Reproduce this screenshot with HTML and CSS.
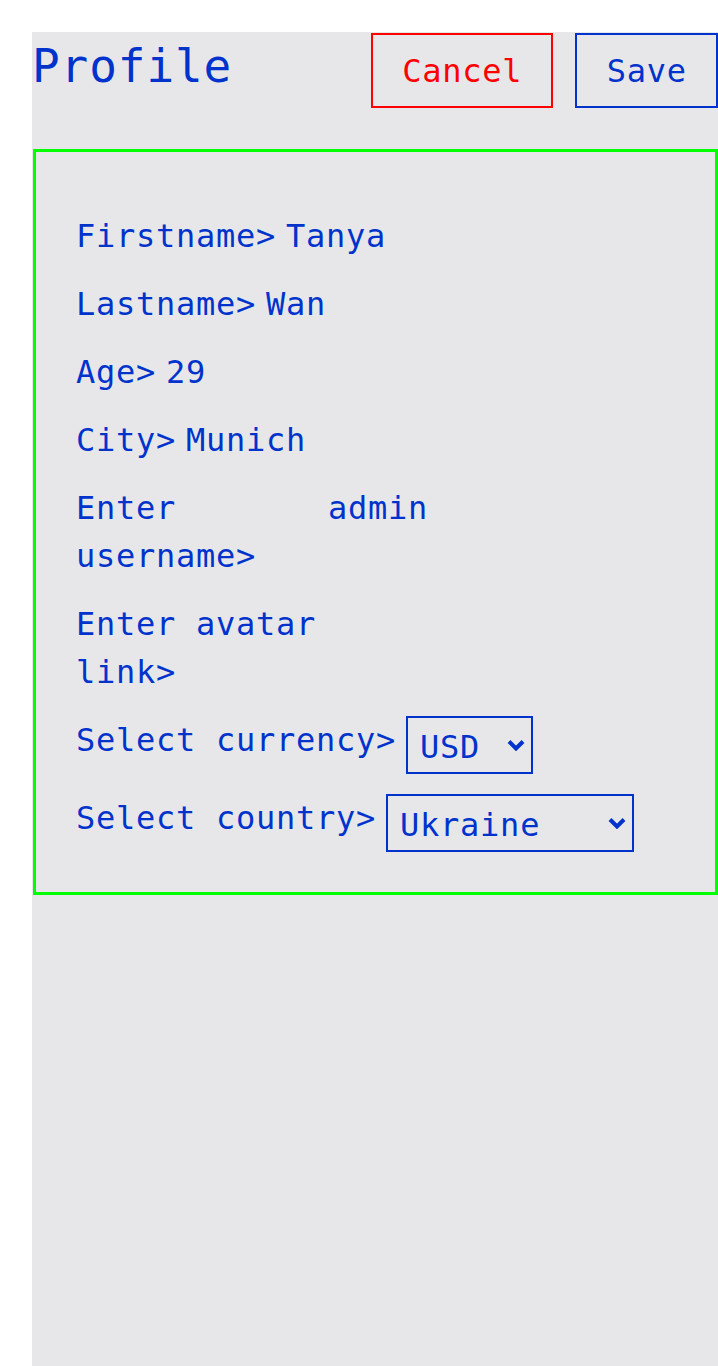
FILE: index.html
```html
<!DOCTYPE html>
<html lang="en">
<head>
<meta charset="utf-8">
<title>Profile</title>
<link rel="stylesheet" href="styles.css">
</head>
<body>
<div class="page">
  <header class="header">
    <h1 class="title">Profile</h1>
    <div class="actions">
      <button class="btn btn-cancel" type="button">Cancel</button>
      <button class="btn btn-save" type="button">Save</button>
    </div>
  </header>
  <form class="card">
    <div class="row"><span class="label">Firstname&gt;</span><span class="value">Tanya</span></div>
    <div class="row"><span class="label">Lastname&gt;</span><span class="value">Wan</span></div>
    <div class="row"><span class="label">Age&gt;</span><span class="value">29</span></div>
    <div class="row"><span class="label">City&gt;</span><span class="value">Munich</span></div>
    <div class="row"><label class="label" for="username">Enter username&gt;</label><input class="field" id="username" type="text" value="admin"></div>
    <div class="row"><label class="label" for="avatar">Enter avatar link&gt;</label><input class="field" id="avatar" type="text" value=""></div>
    <div class="row"><label class="label" for="currency">Select currency&gt;</label>
      <span class="select-wrap">
        <select class="select select-currency" id="currency">
          <option>USD</option><option>EUR</option><option>UAH</option>
        </select>
        <svg class="chevron" width="18" height="12" viewBox="0 0 18 12" aria-hidden="true"><path d="M2 2.5 L9 9.5 L16 2.5" fill="none" stroke="#0033cc" stroke-width="4"/></svg>
      </span>
    </div>
    <div class="row"><label class="label" for="country">Select country&gt;</label>
      <span class="select-wrap">
        <select class="select select-country" id="country">
          <option>Ukraine</option><option>Germany</option><option>Lithuania</option>
        </select>
        <svg class="chevron" width="18" height="12" viewBox="0 0 18 12" aria-hidden="true"><path d="M2 2.5 L9 9.5 L16 2.5" fill="none" stroke="#0033cc" stroke-width="4"/></svg>
      </span>
    </div>
  </form>
</div>
</body>
</html>
```

FILE: styles.css
```css
* { box-sizing: border-box; }

html, body {
  margin: 0;
  padding: 0;
  background: #ffffff;
}

body {
  font-family: "DejaVu Sans Mono", "Liberation Mono", monospace;
  color: #0033cc;
}

.page {
  margin: 32px 0 0 32px;
  padding-top: 1px;
  min-height: calc(100vh - 32px);
  background: #e7e7ea;
}

.header {
  display: flex;
  justify-content: space-between;
  align-items: flex-start;
}

.title {
  margin: 0;
  padding-top: 1px;
  font-size: 46px;
  letter-spacing: 0.9px;
  line-height: 64px;
  font-weight: normal;
  color: #0033cc;
}

.actions {
  display: flex;
  gap: 22px;
}

.btn {
  font-family: inherit;
  font-size: 32px;
  letter-spacing: 0.74px;
  line-height: 44px;
  padding: 14px 29.25px 13px;
  background: transparent;
  border: 2px solid;
  border-radius: 0;
  margin: 0;
}

.btn-cancel { color: #ff0000; border-color: #ff0000; }
.btn-save { color: #0033cc; border-color: #0033cc; }

.card {
  margin: 41px 0 0 1px;
  border: 3px solid #00ff00;
  padding: 40px;
  font-size: 32px;
  letter-spacing: 0.74px;
}

.row {
  display: flex;
  align-items: flex-start;
  gap: 10px;
  margin-top: 18px;
}

.label {
  flex: 0 1 auto;
  padding-top: 2px;
  line-height: 48px;
}

.value {
  padding-top: 2px;
  line-height: 48px;
}

.field {
  flex: 0 1 430px;
  width: 430px;
  min-width: 0;
  height: 48px;
  margin-top: 2px;
  padding: 0;
  border: none;
  outline: none;
  background: transparent;
  font-family: inherit;
  font-size: 32px;
  letter-spacing: 0.74px;
  line-height: 48px;
  color: #0033cc;
}

.select-wrap {
  position: relative;
  display: block;
  flex: none;
  margin-top: 2px;
}

.select {
  display: block;
  appearance: none;
  -webkit-appearance: none;
  height: 58px;
  margin: 0;
  padding: 4px 30px 0 12px;
  border: 2px solid #0033cc;
  border-radius: 0;
  background: transparent;
  font-family: inherit;
  font-size: 32px;
  letter-spacing: 0.74px;
  color: #0033cc;
}

.select-currency { width: 127px; }
.select-country { width: 248px; }

.chevron {
  position: absolute;
  right: 8px;
  top: 23px;
  pointer-events: none;
}
```
